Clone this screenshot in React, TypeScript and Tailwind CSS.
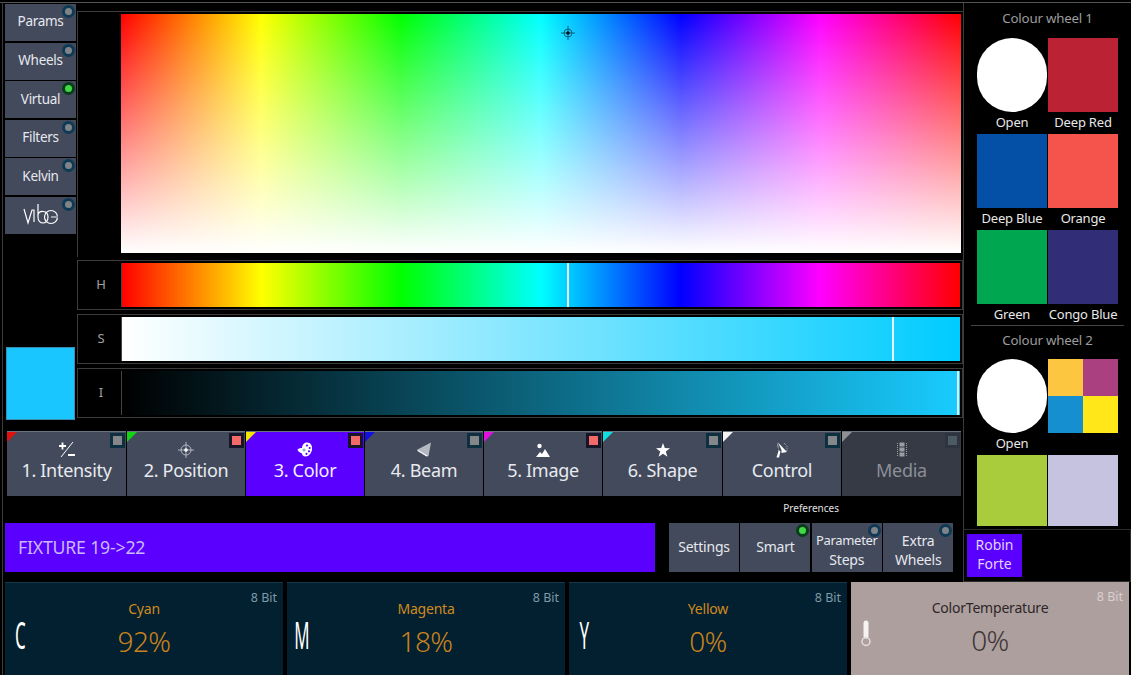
import type { ReactNode } from 'react';
import clsx from 'clsx';

const font = { fontFamily: '"Noto Sans", "Liberation Sans", sans-serif' };

function Dot({ on }: { on?: boolean }) {
  return (
    <span
      className={clsx(
        'absolute right-[1px] top-[1px] flex h-[13px] w-[13px] items-center justify-center rounded-full',
        on ? 'bg-[#0c3a1c]' : 'bg-[#0f3a55]'
      )}
    >
      <span className={clsx('h-[7px] w-[7px] rounded-full', on ? 'bg-[#3fd944]' : 'bg-[#808488]')} />
    </span>
  );
}

function SideButton({ label, on, children }: { label?: string; on?: boolean; children?: ReactNode }) {
  return (
    <div className="relative flex h-[37px] w-[71px] items-center justify-center bg-[#434a5c] pb-[2px] text-[13.5px] tracking-[-0.3px] text-[#e6e8ee]">
      {label}
      {children}
      <Dot on={on} />
    </div>
  );
}

function VibeLogo() {
  return (
    <svg width="36" height="24" viewBox="0 0 36 24" fill="none" stroke="#fff" strokeWidth="1.2">
      <path d="M1 7 L5 21 L9 8 L11 8 L11 20" />
      <path d="M15 2 L15 15 C15 23 25 23 25 15 C25 8 16 8 15 13" />
      <circle cx="28" cy="15" r="6.5" />
      <path d="M28 15 H35" stroke="#9aa0aa" strokeWidth="2" />
    </svg>
  );
}

const IntensityIcon = (
  <svg width="18" height="17" viewBox="0 0 18 17" fill="none" stroke="#fff" strokeWidth="1.6">
    <path d="M1 5 H8 M4.5 1.5 V8.5 M10 14 H17" strokeWidth="1.8" />
    <path d="M15 1 L3 16" strokeWidth="1" />
  </svg>
);

const PositionIcon = (
  <svg width="16" height="16" viewBox="0 0 16 16" fill="none" stroke="#c6cbd4" strokeWidth="0.8">
    <circle cx="8" cy="8" r="5" />
    <path d="M8 0 V16 M0 8 H16" />
    <circle cx="8" cy="8" r="1.8" fill="#fff" stroke="none" />
  </svg>
);

const ColorIcon = (
  <svg width="16" height="15" viewBox="0 0 16 15">
    <path d="M10 0.5 C14 0.5 15.5 4 15 7.5 C14.5 11 12 14.5 8.5 14.5 C6 14.5 5 13 5 11.5 C3 10.5 1 10 0.5 7.5 C1.5 6.5 3 6 5 6 C5 3 7 0.5 10 0.5 Z" fill="#fff" />
    <circle cx="10" cy="3.5" r="1.1" fill="#5a00ff" />
    <circle cx="12.7" cy="6" r="1.1" fill="#5a00ff" />
    <circle cx="12" cy="9.3" r="1.1" fill="#5a00ff" />
    <circle cx="9.5" cy="11.8" r="1.1" fill="#5a00ff" />
    <circle cx="7" cy="8" r="1.5" fill="#7fb0d0" />
  </svg>
);

const BeamIcon = (
  <svg width="15" height="15" viewBox="0 0 15 15">
    <path d="M14 0.5 L11.5 14 L0.5 7.5 Z" fill="#b4b8c0" />
    <path d="M0.5 7.5 L11.5 14 L9.5 14.5 L0.5 9 Z" fill="#fff" />
  </svg>
);

const ImageIcon = (
  <svg width="14" height="14" viewBox="0 0 14 14" fill="#fff">
    <circle cx="3.5" cy="3" r="2.2" />
    <path d="M0 14 L4 9 L6 11 L9 6 L14 14 Z" />
  </svg>
);

const ShapeIcon = (
  <svg width="14" height="14" viewBox="0 0 14 14" fill="#fff">
    <path d="M7 0 L8.8 5 L14 5.2 L9.8 8.5 L11.4 13.8 L7 10.7 L2.6 13.8 L4.2 8.5 L0 5.2 L5.2 5 Z" />
  </svg>
);

const ControlIcon = (
  <svg width="12" height="16" viewBox="0 0 12 16">
    <path d="M2 0.5 L11 10 L5.5 11 L5.5 8 Z" fill="#fff" />
    <path d="M2 0.5 C1 4 2 8 4.5 9.5 L3 15.5 H0.5 L2.5 9 Z" fill="#fff" />
    <path d="M8 1 L11 4 V9" fill="none" stroke="#c8ccd4" strokeWidth="0.8" strokeDasharray="1 1" />
  </svg>
);

const MediaIcon = (
  <svg width="10" height="15" viewBox="0 0 10 15" fill="#9a9da2">
    <rect x="2.5" y="0.5" width="5" height="4" />
    <rect x="2.5" y="5.5" width="5" height="4" />
    <rect x="2.5" y="10.5" width="5" height="4" />
    <path d="M0.5 1 V14 M9.5 1 V14" stroke="#9a9da2" strokeDasharray="1 1" />
  </svg>
);

type Tab = {
  label: string;
  corner: string;
  icon: ReactNode;
  red?: boolean;
  active?: boolean;
  dim?: boolean;
  width: string;
};

const tabs: Tab[] = [
  { label: '1. Intensity', corner: 'bg-[#e01010]', icon: IntensityIcon, width: 'w-[119px]' },
  { label: '2. Position', corner: 'bg-[#14d414]', icon: PositionIcon, red: true, width: 'w-[118px]' },
  { label: '3. Color', corner: 'bg-[#f2e600]', icon: ColorIcon, red: true, active: true, width: 'w-[118px]' },
  { label: '4. Beam', corner: 'bg-[#1010e0]', icon: BeamIcon, width: 'w-[118px]' },
  { label: '5. Image', corner: 'bg-[#e010e0]', icon: ImageIcon, red: true, width: 'w-[118px]' },
  { label: '6. Shape', corner: 'bg-[#10e0e0]', icon: ShapeIcon, width: 'w-[119px]' },
  { label: 'Control', corner: 'bg-[#f4f4f4]', icon: ControlIcon, width: 'w-[118px]' },
  { label: 'Media', corner: 'bg-[#8e9094]', icon: MediaIcon, dim: true, width: 'w-[119px]' },
];

function TabButton({ tab }: { tab: Tab }) {
  return (
    <div
      className={clsx(
        'relative flex h-[65px] flex-col items-center border-t border-[#6b7280] pt-[9px]',
        tab.width,
        tab.active ? 'bg-[#5a00ff] text-[#f4f0ff]' : tab.dim ? 'bg-[#363a45] text-[#8b8f98]' : 'bg-[#434a5c] text-[#e8eaf0]'
      )}
    >
      <span className={clsx('absolute left-0 top-0 h-[10px] w-[10px] [clip-path:polygon(0_0,100%_0,0_100%)]', tab.corner)} />
      <span
        className={clsx(
          'absolute right-[1px] top-[1px] flex h-[15px] w-[15px] items-center justify-center',
          tab.dim ? 'bg-[#2e3540]' : tab.red ? 'bg-[#161628]' : 'bg-[#0d3040]'
        )}
      >
        <span className={clsx('h-[9px] w-[9px]', tab.dim ? 'bg-[#4c5a66]' : tab.red ? 'bg-[#f46a68]' : 'bg-[#85868a]')} />
      </span>
      <span className="flex h-[17px] items-center">{tab.icon}</span>
      <span className="mt-[-1px] text-[18px] leading-[26px] tracking-[-0.3px]">{tab.label}</span>
    </div>
  );
}

function SliderRow({ name, bar, marker, mt }: { name: string; bar: string; marker: string; mt: string }) {
  return (
    <div className={clsx('flex h-[50px] border border-[#3c3c3c] pl-[6px] pr-[2px]', mt)}>
      <div className="flex w-[34px] items-center justify-center text-[13px] text-[#a0a0a0]">{name}</div>
      <div className={clsx('relative my-[2px] ml-[3px] flex-1 border-l border-[#444]', bar)}>
        <span className={clsx('absolute bottom-0 top-0 w-[2px] bg-[#e8f0f4]', marker)} />
      </div>
    </div>
  );
}

function Swatch({ label, className, round }: { label?: string; className?: string; round?: boolean }) {
  return (
    <div className="flex flex-col items-center">
      <div className={clsx('h-[74px] w-[70px]', round ? 'rounded-full bg-white' : className)} />
      {label && <div className="h-[22px] whitespace-nowrap text-[13px] leading-[20px] tracking-[-0.2px] text-[#e8e8e8]">{label}</div>}
    </div>
  );
}

function ActionButton({ lines, on, dot }: { lines: string[]; on?: boolean; dot?: boolean }) {
  return (
    <div
      className={clsx(
        'relative flex h-[49px] w-[70px] flex-col items-center justify-center bg-[#434a5c] text-[14px] leading-[19px] tracking-[-0.2px] text-[#e6e8ee]',
        lines.length > 1 ? 'pt-[5px]' : 'pb-[3px]'
      )}
    >
      {lines.map((l) => (
        <span key={l} className={clsx(l === 'Parameter' && 'text-[13px] tracking-[-0.3px]')}>
          {l}
        </span>
      ))}
      {dot && <Dot on={on} />}
    </div>
  );
}

function ThermoIcon() {
  return (
    <svg width="10" height="27" viewBox="0 0 10 27">
      <rect x="2.5" y="0.5" width="5" height="18" rx="2.5" fill="#f6f2f2" />
      <circle cx="5" cy="21.5" r="4" fill="none" stroke="#e8e0e0" strokeWidth="1.4" />
    </svg>
  );
}

function Card({ letter, name, value, grey }: { letter?: string; name: string; value: string; grey?: boolean }) {
  return (
    <div className={clsx('relative flex h-[93px] w-[278px] flex-col items-center pt-[16px]', grey ? 'bg-[#ae9f9f]' : 'border-t border-[#123a4a] bg-[#02202f]')}>
      <span className={clsx('absolute right-[6px] top-[6px] text-[12.5px]', grey ? 'text-[#d8cfcf]' : 'text-[#7f9aa8]')}>8 Bit</span>
      <span className="absolute left-[8px] top-[36px] flex h-[30px] w-[14px] items-center justify-center">
        {letter ? (
          <span className="scale-x-[0.65] scale-y-[1.5] text-[26px] leading-none text-white">{letter}</span>
        ) : (
          <ThermoIcon />
        )}
      </span>
      <span className={clsx('text-[14px] leading-[20px] tracking-[-0.2px]', grey && 'text-[13.5px] text-[#2c2626]', !grey && 'text-[#d08a20]')}>{name}</span>
      <span className={clsx('mt-[3px] text-[28px] font-light leading-[38px] tracking-[-0.5px]', grey ? 'text-[#3e3636]' : 'text-[#c8821e]')}>{value}</span>
    </div>
  );
}

export default function App() {
  return (
    <div className="relative h-[675px] w-[1131px] overflow-hidden bg-black pt-[2px]" style={font}>
      <div className="absolute bottom-0 left-[2px] top-[2px] w-[1px] bg-[#3c3c3c]" />
      <div className="flex h-[580px] border-t border-[#555]">
        <div className="w-[963px]">
          <div className="flex h-[423px] pt-[1px]">
            <div className="flex w-[77px] flex-col pl-[5px]">
              <div className="flex flex-col gap-[1.6px]">
                <SideButton label="Params" />
                <SideButton label="Wheels" />
                <SideButton label="Virtual" on />
                <SideButton label="Filters" />
                <SideButton label="Kelvin" />
                <SideButton>
                  <VibeLogo />
                </SideButton>
              </div>
              <div className="ml-[1px] mt-[113px] h-[73px] w-[69px] border border-[#3a8fb0] bg-[#19c6ff]" />
            </div>
            <div className="flex-1">
              <div className="mt-[7px] flex h-[246px] border-l border-t border-[#3c3c3c] pl-[43px] pt-[2px]">
                <div className="relative h-[239px] w-[840px] bg-[linear-gradient(to_bottom,rgba(255,255,255,0),#fff),linear-gradient(to_right,#f00,#ff0,#0f0,#0ff,#00f,#f0f,#f00)] bg-[length:100%_100%]">
                  <svg className="absolute left-[440px] top-[12px]" width="14" height="14" viewBox="0 0 14 14" fill="none" stroke="#0a4a66" strokeWidth="0.8">
                    <circle cx="7" cy="7" r="4" />
                    <path d="M7 0 V14 M0 7 H14" />
                    <circle cx="7" cy="7" r="1.8" fill="#02141e" stroke="none" />
                  </svg>
                </div>
              </div>
              <SliderRow
                mt="mt-[3px]"
                name="H"
                bar="bg-[linear-gradient(to_right,#f00,#ff0,#0f0,#0ff,#00f,#f0f,#f00)]"
                marker="left-[445px]"
              />
              <SliderRow
                mt="mt-[4px]"
                name="S"
                bar="bg-[linear-gradient(to_right,#fff,#00ccff)]"
                marker="left-[770px]"
              />
              <SliderRow
                mt="mt-[4px]"
                name="I"
                bar="bg-[linear-gradient(to_right,#000,#19ccff)]"
                marker="left-[835px]"
              />
            </div>
          </div>
          <div className="mt-[5px] flex gap-[1px] pl-[7px]">
            {tabs.map((t) => (
              <TabButton key={t.label} tab={t} />
            ))}
          </div>
          <div className="h-[27px] pr-[124px] pt-[4px] text-right text-[10px] leading-[16px] text-[#e0e0e0]">Preferences</div>
          <div className="flex items-start pl-[5px]">
            <div className="flex h-[49px] w-[650px] items-center bg-[#5a00ff] pl-[13px] text-[17.7px] tracking-[-0.2px] text-[#c9b8ff]">FIXTURE 19-&gt;22</div>
            <div className="ml-[14px] flex gap-[1.4px]">
              <ActionButton lines={['Settings']} />
              <ActionButton lines={['Smart']} dot on />
              <ActionButton lines={['Parameter', 'Steps']} dot />
              <ActionButton lines={['Extra', 'Wheels']} dot />
            </div>
          </div>
        </div>
        <div className="flex w-[168px] flex-col border-l border-[#3c3c3c]">
          <div className="h-[526px]">
            <div className="h-[523px] overflow-hidden">
              <div className="mt-[4px] text-center text-[13.3px] leading-[22px] tracking-[-0.2px] text-[#9c9c9c]">Colour wheel 1</div>
              <div className="ml-[13px] mt-[9px] grid w-[141px] grid-cols-[70px_70px] gap-x-[1px]">
                <Swatch round label="Open" />
                <Swatch label="Deep Red" className="bg-[#bb2233]" />
                <Swatch label="Deep Blue" className="bg-[#0450a6]" />
                <Swatch label="Orange" className="bg-[#f4544c]" />
                <Swatch label="Green" className="bg-[#00a650]" />
                <Swatch label="Congo Blue" className="bg-[#312d76]" />
              </div>
              <div className="mx-[7px] mt-[-1px] border-t border-[#444]" />
              <div className="mt-[3px] text-center text-[13.3px] leading-[22px] tracking-[-0.2px] text-[#9c9c9c]">Colour wheel 2</div>
              <div className="ml-[13px] mt-[8px] grid w-[141px] grid-cols-[70px_70px] gap-x-[1px]">
                <Swatch round label="Open" />
                <div className="grid h-[74px] w-[70px] grid-cols-2 grid-rows-2">
                  <div className="bg-[#fdc640]" />
                  <div className="bg-[#ab4080]" />
                  <div className="bg-[#158fd0]" />
                  <div className="bg-[#ffe71a]" />
                </div>
                <Swatch className="bg-[#a8cc3c]" />
                <Swatch className="bg-[#c6c3e0]" />
              </div>
            </div>
          </div>
          <div className="flex h-[53px] border-y border-r border-[#2c2c2c] pl-[3px] pt-[4px]">
            <div className="flex h-[43px] w-[55px] flex-col items-center justify-center bg-[#5a00ff] pb-[4px] text-[14px] leading-[19px] text-[#e0d4ff]">
              <span>Robin</span>
              <span>Forte</span>
            </div>
          </div>
        </div>
      </div>
      <div className="flex gap-[4px] pl-[5px]">
        <Card letter="C" name="Cyan" value="92%" />
        <Card letter="M" name="Magenta" value="18%" />
        <Card letter="Y" name="Yellow" value="0%" />
        <Card grey name="ColorTemperature" value="0%" />
      </div>
    </div>
  );
}
